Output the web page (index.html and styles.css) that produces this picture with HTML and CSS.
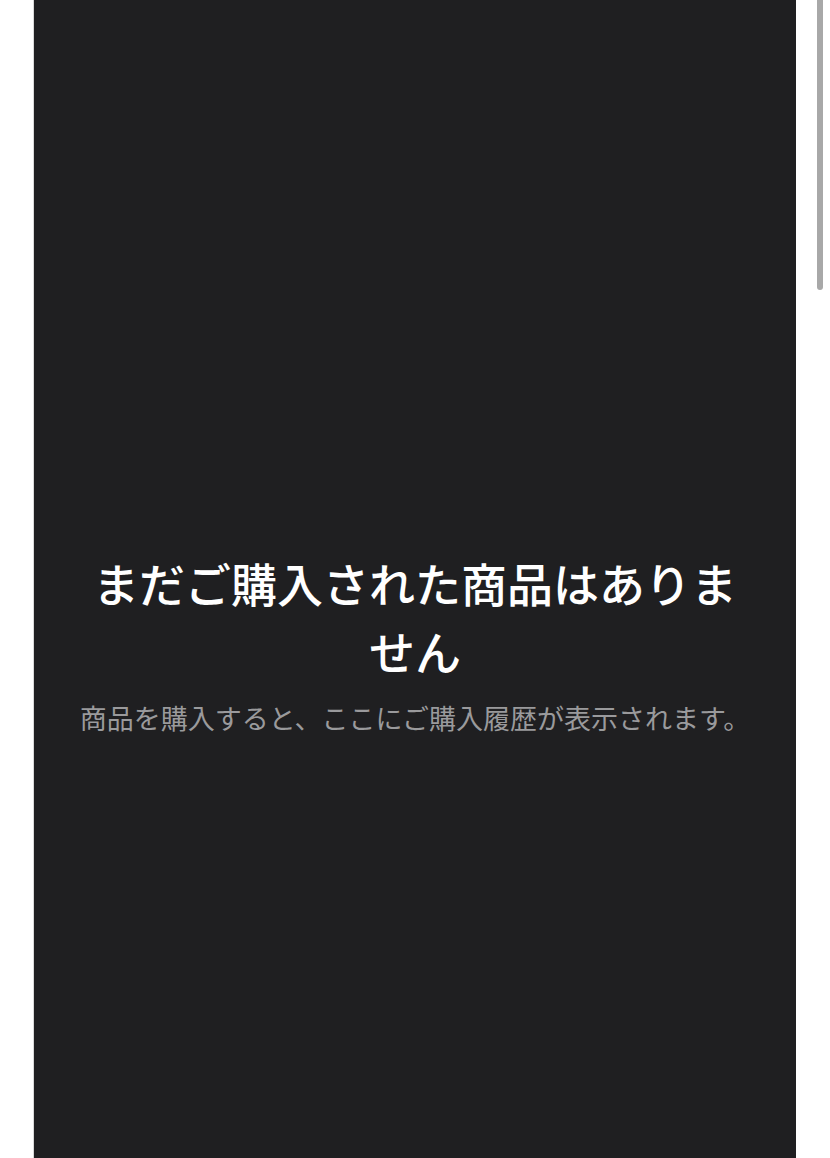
FILE: index.html
```html
<!DOCTYPE html>
<html lang="ja">
<head>
<meta charset="utf-8">
<link rel="stylesheet" href="styles.css">
</head>
<body>
<div class="page">
  <main class="panel">
    <div class="empty">
      <h1 class="empty-title">まだご購入された商品はありません</h1>
      <p class="empty-text">商品を購入すると、ここにご購入履歴が表示されます。</p>
    </div>
  </main>
  <div class="scrollbar"></div>
</div>
</body>
</html>
```
FILE: styles.css
```css
html, body {
  margin: 0;
  padding: 0;
  background: #ffffff;
}
.page {
  position: relative;
  width: 830px;
  height: 1158px;
  overflow: hidden;
  display: flex;
}
.panel {
  margin-left: 34px;
  width: 762px;
  height: 1158px;
  background: #1f1f21;
  box-shadow: -1px 0 0 #d8d8d8;
  box-sizing: border-box;
  padding: 548px 42px 0;
}
.empty {
  text-align: center;
  font-family: "Noto Sans CJK JP", "Noto Sans", sans-serif;
}
.empty-title {
  margin: 0;
  font-size: 46px;
  line-height: 68px;
  font-weight: 500;
  color: #ffffff;
}
.empty-text {
  margin: 14px 0 0;
  font-size: 27px;
  line-height: 40px;
  font-weight: 400;
  color: #9a9a9c;
  white-space: nowrap;
}
.scrollbar {
  position: absolute;
  left: 817px;
  top: 0;
  width: 6px;
  height: 290px;
  background: #a8a8a8;
  border-radius: 0 0 3px 3px;
}
```
